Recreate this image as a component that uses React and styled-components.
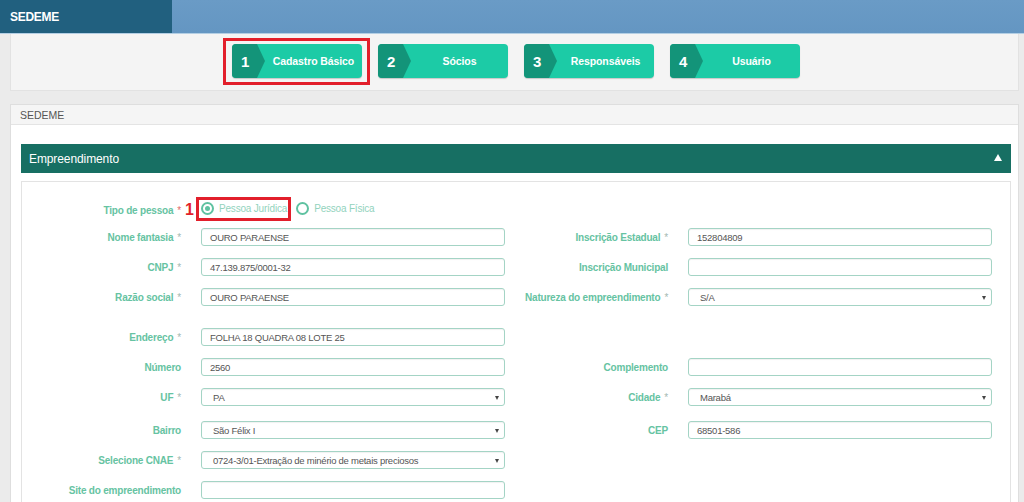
import React from "react";
import styled, { createGlobalStyle } from "styled-components";

const Global = createGlobalStyle`
  html, body { margin: 0; padding: 0; background: #ebebeb; }
  body { font-family: "Liberation Sans", Arial, sans-serif; overflow: hidden; }
  * { box-sizing: border-box; }
`;

const Page = styled.div`
  width: 1024px;
  height: 502px;
  overflow: hidden;
  background: #ebebeb;
`;

const TopBar = styled.header`
  display: flex;
  height: 34px;
  border-bottom: 1px solid #b4cfe4;
`;

const Brand = styled.div`
  width: 172px;
  background: #21607f;
  color: #fff;
  font-weight: 700;
  font-size: 12px;
  letter-spacing: -0.3px;
  display: flex;
  align-items: center;
  padding-left: 10px;
`;

const TopFill = styled.div`
  flex: 1;
  background: linear-gradient(180deg, #6a9bc6 0%, #6496c2 100%);
`;

const Main = styled.main`
  padding: 0 5px 0 10px;
`;

const StepsCard = styled.section`
  background: #f4f4f4;
  border: 1px solid #e2e2e2;
  border-top: none;
  padding: 10px 0 12px;
  display: flex;
  justify-content: center;
`;

const Steps = styled.div`
  display: flex;
  gap: 16px;
  margin-left: 3px;
`;

const Highlight = styled.div`
  position: relative;
  &::after {
    content: "";
    position: absolute;
    left: -9px;
    right: -8px;
    top: -6px;
    bottom: -7px;
    border: 3px solid #e21f2b;
    pointer-events: none;
  }
`;

const StepButton = styled.div`
  position: relative;
  width: 130px;
  height: 34px;
  border-radius: 4px;
  background: #1ccba6;
  box-shadow: 0 1px 1px rgba(0, 0, 0, 0.18);
  display: flex;
  align-items: center;
  overflow: hidden;
  color: #fff;
`;

const StepNum = styled.div`
  position: relative;
  width: 25px;
  height: 100%;
  background: #139479;
  font-weight: 700;
  font-size: 15px;
  display: flex;
  align-items: center;
  padding-left: 9px;
  &::after {
    content: "";
    position: absolute;
    right: -8px;
    top: 0;
    border-top: 17px solid transparent;
    border-bottom: 17px solid transparent;
    border-left: 8px solid #139479;
  }
`;

const StepLabel = styled.div`
  flex: 1;
  text-align: center;
  font-weight: 700;
  font-size: 10.5px;
  letter-spacing: -0.1px;
  padding-left: 8px;
`;

const Card = styled.section`
  margin-top: 13px;
  background: #fff;
  border: 1px solid #dedede;
  height: 420px;
`;

const CardHeader = styled.div`
  height: 20px;
  background: #f5f5f5;
  border-bottom: 1px solid #e4e4e4;
  color: #555;
  font-size: 10.5px;
  display: flex;
  align-items: center;
  padding-left: 9px;
`;

const CardBody = styled.div`
  padding: 19px 7px 0 10px;
`;

const SectionBar = styled.div`
  height: 29px;
  background: #176f63;
  color: #fff;
  font-size: 12px;
  letter-spacing: -0.1px;
  display: flex;
  align-items: center;
  justify-content: space-between;
  padding: 0 9px 0 8px;
`;

const Caret = styled.span`
  width: 0;
  height: 0;
  border-left: 4px solid transparent;
  border-right: 4px solid transparent;
  border-bottom: 7px solid #fff;
  margin-bottom: 2px;
`;

const FormBox = styled.div`
  margin-top: 8px;
  border: 1px solid #e3e3e3;
  padding-top: 18px;
  height: 400px;
`;

const Row = styled.div`
  display: grid;
  grid-template-columns: 159px 304px 143px 304px;
  column-gap: 20px;
  align-items: center;
  margin-top: ${(p) => p.$mt || 0}px;
  min-height: ${(p) => p.$h || 18}px;
`;

const Label = styled.label`
  text-align: right;
  font-weight: 700;
  font-size: 10px;
  letter-spacing: -0.2px;
  color: #66c3a2;
  white-space: nowrap;
`;

const Req = styled.span`
  color: ${(p) => (p.$alert ? "#e26a6a" : "#a3b8b1")};
  margin-left: 4px;
  font-weight: 400;
`;

const Control = styled.div`
  position: relative;
  height: 18px;
  border: 1px solid #a4d4c5;
  border-radius: 3px;
  box-shadow: inset 0 1px 1px rgba(0, 0, 0, 0.06);
  background: #fff;
  color: #555;
  font-size: 9.5px;
  letter-spacing: -0.25px;
  display: flex;
  align-items: center;
  padding-left: ${(p) => (p.$select ? 11 : 8)}px;
  white-space: nowrap;
`;

const Arrow = styled.span`
  position: absolute;
  right: 5px;
  top: 7px;
  border-left: 2.5px solid transparent;
  border-right: 2.5px solid transparent;
  border-top: 4px solid #444;
`;

const RadioGroup = styled.div`
  position: relative;
  display: flex;
  align-items: center;
  gap: 6px;
  height: 20px;
  margin-top: -3px;
`;

const Marker = styled.span`
  position: absolute;
  left: -16px;
  top: 1px;
  color: #e21f2b;
  font-weight: 700;
  font-size: 16px;
  line-height: 20px;
`;

const RadioOption = styled.span`
  position: relative;
  display: flex;
  align-items: center;
  gap: 5px;
  height: 18px;
  font-size: 10px;
  letter-spacing: -0.2px;
  color: #93d3bd;
  padding-right: 3px;
  ${(p) =>
    p.$boxed &&
    `
    &::after {
      content: "";
      position: absolute;
      left: -5px;
      right: -1px;
      top: -3px;
      bottom: -3px;
      border: 3px solid #e21f2b;
    }
  `}
`;

const RadioDot = styled.span`
  width: 13px;
  height: 13px;
  border-radius: 50%;
  border: 2px solid #5fc2a1;
  display: flex;
  align-items: center;
  justify-content: center;
  &::after {
    content: "";
    width: 5px;
    height: 5px;
    border-radius: 50%;
    background: ${(p) => (p.$checked ? "#5fc2a1" : "transparent")};
  }
`;

const Empty = styled.div``;

function Field({ label, req, value, select }) {
  if (!label) return [<Empty key="a" />, <Empty key="b" />];
  return [
    <Label key="l">
      {label}
      {req && <Req>*</Req>}
    </Label>,
    <Control key="c" $select={select}>
      {value}
      {select && <Arrow />}
    </Control>,
  ];
}

const steps = [
  { n: 1, t: "Cadastro Básico" },
  { n: 2, t: "Sócios" },
  { n: 3, t: "Responsáveis" },
  { n: 4, t: "Usuário" },
];

export default function App() {
  return (
    <Page>
      <Global />
      <TopBar>
        <Brand>SEDEME</Brand>
        <TopFill />
      </TopBar>
      <Main>
        <StepsCard>
          <Steps>
            {steps.map((s) => {
              const btn = (
                <StepButton key={s.n}>
                  <StepNum>{s.n}</StepNum>
                  <StepLabel>{s.t}</StepLabel>
                </StepButton>
              );
              return s.n === 1 ? <Highlight key={s.n}>{btn}</Highlight> : btn;
            })}
          </Steps>
        </StepsCard>
        <Card>
          <CardHeader>SEDEME</CardHeader>
          <CardBody>
            <SectionBar>
              Empreendimento
              <Caret />
            </SectionBar>
            <FormBox>
              <Row $h={20}>
                <Label>
                  Tipo de pessoa<Req $alert>*</Req>
                </Label>
                <RadioGroup>
                  <Marker>1</Marker>
                  <RadioOption $boxed>
                    <RadioDot $checked />
                    Pessoa Jurídica
                  </RadioOption>
                  <RadioOption>
                    <RadioDot />
                    Pessoa Física
                  </RadioOption>
                </RadioGroup>
              </Row>
              <Row $mt={8}>
                <Field label="Nome fantasia" req value="OURO PARAENSE" />
                <Field label="Inscrição Estadual" req value="152804809" />
              </Row>
              <Row $mt={12}>
                <Field label="CNPJ" req value="47.139.875/0001-32" />
                <Field label="Inscrição Municipal" value="" />
              </Row>
              <Row $mt={12}>
                <Field label="Razão social" req value="OURO PARAENSE" />
                <Field label="Natureza do empreendimento" req value="S/A" select />
              </Row>
              <Row $mt={22}>
                <Field label="Endereço" req value="FOLHA 18 QUADRA 08 LOTE 25" />
                <Field />
              </Row>
              <Row $mt={12}>
                <Field label="Número" value="2560" />
                <Field label="Complemento" value="" />
              </Row>
              <Row $mt={12}>
                <Field label="UF" req value="PA" select />
                <Field label="Cidade" req value="Marabá" select />
              </Row>
              <Row $mt={15}>
                <Field label="Bairro" value="São Félix I" select />
                <Field label="CEP" value="68501-586" />
              </Row>
              <Row $mt={12}>
                <Field
                  label="Selecione CNAE"
                  req
                  value="0724-3/01-Extração de minério de metais preciosos"
                  select
                />
                <Field />
              </Row>
              <Row $mt={12}>
                <Field label="Site do empreendimento" value="" />
                <Field />
              </Row>
            </FormBox>
          </CardBody>
        </Card>
      </Main>
    </Page>
  );
}
